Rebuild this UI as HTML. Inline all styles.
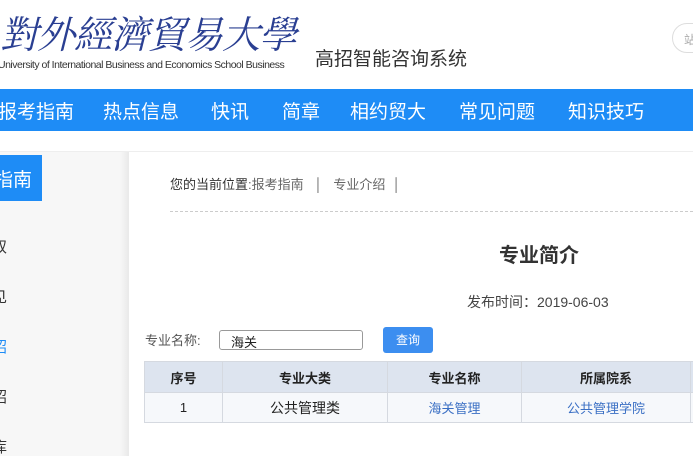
<!DOCTYPE html>
<html><head><meta charset="utf-8"><style>
*{margin:0;padding:0;box-sizing:border-box}
body{width:693px;height:456px;overflow:hidden;background:#fff;font-family:"Liberation Sans","Noto Sans CJK SC",sans-serif;position:relative}
.a{position:absolute;white-space:nowrap}
.nav{position:absolute;left:0;top:89px;width:693px;height:42px;background:#1e8cf6}
.nav span{position:absolute;top:8px;color:#fff;font-size:19px}
table{border-collapse:collapse;position:absolute;left:144px;top:361px;font-size:13px;table-layout:fixed;width:570px}
td,th{border:1px solid #d5d9e0;text-align:center}
th{background:#dde4ef;height:31px;font-weight:bold;color:#222}
td{background:#f6f8fb;height:30px;color:#222}
.l{color:#3a6fc4}
</style></head><body>
<div class="a" style="left:0;top:4px;font-family:'Noto Serif CJK SC',serif;font-size:38px;color:#2a3f92;font-style:italic;letter-spacing:-1px">對外經濟貿易大學</div>
<div class="a" style="left:-2px;top:59px;font-size:10.5px;color:#333;letter-spacing:-0.5px">University of International Business and Economics School Business</div>
<div class="a" style="left:315px;top:44px;font-size:19px;color:#333">高招智能咨询系统</div>
<div class="a" style="left:672px;top:23px;width:40px;height:30px;border:1px solid #ddd;border-radius:15px;font-size:12px;color:#aaa;padding:7px 0 0 11px">站</div>
<div class="nav"><span style="left:-2px">报考指南</span><span style="left:103px">热点信息</span><span style="left:211px">快讯</span><span style="left:282px">简章</span><span style="left:350px">相约贸大</span><span style="left:459px">常见问题</span><span style="left:568px">知识技巧</span></div>
<div class="a" style="left:0;top:151px;width:693px;height:1px;background:#eee"></div>
<div class="a" style="left:0;top:152px;width:120px;height:304px;background:#f7f7f7"></div>
<div class="a" style="left:120px;top:152px;width:9px;height:304px;background:linear-gradient(to right,#f7f7f7,#e9e9e9)"></div>
<div class="a" style="left:0;top:155px;width:42px;height:46px;background:#1e8cf6;color:#fff;font-size:19px;padding-top:10px;text-indent:-6px">指南</div>
<div class="a" style="left:-8px;top:236px;font-size:15px;color:#333">奴</div>
<div class="a" style="left:-8px;top:286px;font-size:15px;color:#333">见</div>
<div class="a" style="left:-8px;top:336px;font-size:15px;color:#1e8cf6">绍</div>
<div class="a" style="left:-8px;top:386px;font-size:15px;color:#333">绍</div>
<div class="a" style="left:-8px;top:436px;font-size:15px;color:#333">库</div>
<div class="a" style="left:170px;top:174px;font-size:13px;color:#333">您的当前位置<span style="color:#666">:报考指南 &nbsp; │ &nbsp; 专业介绍 &nbsp;│</span></div>
<div class="a" style="left:170px;top:211px;width:523px;border-top:1px dashed #ccc"></div>
<div class="a" style="left:499px;top:239px;font-size:20px;font-weight:bold;color:#333">专业简介</div>
<div class="a" style="left:467px;top:292px;font-size:14px;color:#444">发布时间：2019-06-03</div>
<div class="a" style="left:145px;top:330px;font-size:13px;color:#555">专业名称:</div>
<div class="a" style="left:219px;top:330px;width:144px;height:20px;border:1px solid #999;border-radius:3px;font-size:13px;padding:1px 0 0 11px;color:#222">海关</div>
<div class="a" style="left:383px;top:327px;width:50px;height:26px;background:#3c8ef0;border-radius:3px;color:#fff;font-size:12px;text-align:center;line-height:26px">查询</div>
<table><colgroup><col style="width:78px"><col style="width:165px"><col style="width:134px"><col style="width:169px"><col style="width:24px"></colgroup>
<tr><th>序号</th><th>专业大类</th><th>专业名称</th><th>所属院系</th><th></th></tr>
<tr><td>1</td><td style="font-size:14px">公共管理类</td><td class="l">海关管理</td><td class="l">公共管理学院</td><td></td></tr></table>
</body></html>
